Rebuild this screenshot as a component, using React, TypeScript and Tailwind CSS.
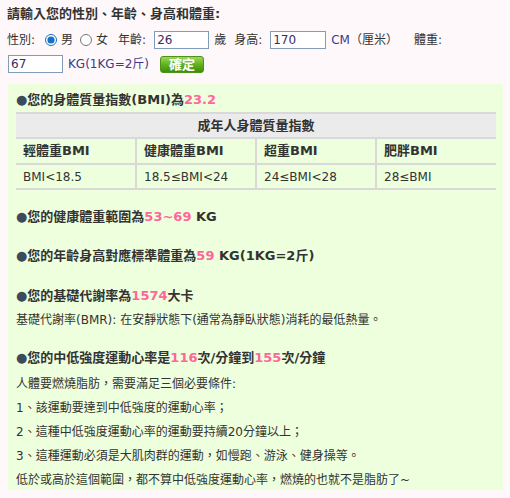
const FONT = "font-['DejaVu_Sans','Noto_Sans_CJK_TC',sans-serif]";

function Pink({ children }: { children: React.ReactNode }) {
  return <span className="text-[#ff6699]">{children}</span>;
}

function Heading({ children, className = "" }: { children: React.ReactNode; className?: string }) {
  return (
    <div className={`h-[24px] leading-[24px] text-[13px] font-bold text-[#333] ${className}`}>
      <span className="text-[#3d4a5c]">●</span>
      {children}
    </div>
  );
}

function Line({ children, className = "" }: { children: React.ReactNode; className?: string }) {
  return <div className={`h-[24px] leading-[24px] text-[12px] text-[#333] ${className}`}>{children}</div>;
}

const cols = [
  { label: "輕體重BMI", range: "BMI<18.5" },
  { label: "健康體重BMI", range: "18.5≤BMI<24" },
  { label: "超重BMI", range: "24≤BMI<28" },
  { label: "肥胖BMI", range: "28≤BMI" },
];

export default function App() {
  return (
    <div className={`w-[510px] h-[498px] bg-[#fff8fa] text-[#333] ${FONT}`}>
      <div className="h-[28px] leading-[28px] px-[7px] text-[13px] font-bold">請輸入您的性別、年齡、身高和體重:</div>

      <div className="h-[24px] flex items-center pl-[7px] text-[12px]">
        <span>性別:</span>
        <input type="radio" name="sex" defaultChecked className="ml-[10px] w-[12px] h-[12px] accent-[#1670c4]" />
        <span className="ml-[4px]">男</span>
        <input type="radio" name="sex" className="ml-[7px] w-[12px] h-[12px]" />
        <span className="ml-[4px]">女</span>
        <span className="ml-[10px]">年齡:</span>
        <input
          defaultValue="26"
          className="ml-[8px] w-[55px] h-[18px] border border-[#7f9db9] bg-white px-[2px] text-[12px] text-[#3a2a66] outline-none"
        />
        <span className="ml-[5px]">歲</span>
        <span className="ml-[8px]">身高:</span>
        <input
          defaultValue="170"
          className="ml-[8px] w-[56px] h-[18px] border border-[#7f9db9] bg-white px-[2px] text-[12px] text-[#3a2a66] outline-none"
        />
        <span className="ml-[5px] text-[#3a3a8a]">CM</span>
        <span>（厘米）</span>
        <span className="ml-[16px]">體重:</span>
      </div>

      <div className="h-[24px] flex items-center pl-[8px] text-[12px]">
        <input
          defaultValue="67"
          className="w-[55px] h-[18px] border border-[#7f9db9] bg-white px-[2px] text-[12px] text-[#3a2a66] outline-none"
        />
        <span className="ml-[5px] text-[#3a3a8a]">KG(1KG=2斤)</span>
        <button className="ml-[11px] w-[44px] h-[17px] rounded-[3px] border border-[#4b9414] bg-gradient-to-b from-[#9ad85c] via-[#62b220] to-[#3f8c0c] text-white text-[13px] font-bold leading-[15px]">
          確定
        </button>
      </div>

      <div className="mt-[8px] ml-[8px] w-[495px] h-[406px] bg-[#eeffdd] pl-[8px] pr-[7px] pt-[4px]">
        <Heading>
          您的身體質量指數(BMI)為<Pink>23.2</Pink>
        </Heading>

        <table className="w-full border-collapse text-[12px]">
          <thead>
            <tr>
              <th colSpan={4} className="h-[25px] bg-[#ebebeb] border-t-2 border-[#d9d9d9] text-[13px] font-bold text-center">
                成年人身體質量指數
              </th>
            </tr>
          </thead>
          <tbody>
            <tr>
              {cols.map((c, i) => (
                <td
                  key={c.label}
                  className={`h-[26px] w-1/4 pl-[7px] text-left text-[13px] font-bold border-t-2 border-[#d9d9d9] ${i > 0 ? "border-l-2" : ""}`}
                >
                  {c.label}
                </td>
              ))}
            </tr>
            <tr>
              {cols.map((c, i) => (
                <td
                  key={c.range}
                  className={`h-[25px] pl-[7px] text-left border-y-2 border-[#d9d9d9] ${i > 0 ? "border-l-2" : ""}`}
                >
                  {c.range}
                </td>
              ))}
            </tr>
          </tbody>
        </table>

        <Heading className="mt-[15px]">
          您的健康體重範圍為<Pink>53~69</Pink> KG
        </Heading>
        <Heading className="mt-[15px]">
          您的年齡身高對應標準體重為<Pink>59</Pink> KG(1KG=2斤)
        </Heading>
        <Heading className="mt-[16px]">
          您的基礎代謝率為<Pink>1574</Pink>大卡
        </Heading>
        <Line>基礎代謝率(BMR): 在安靜狀態下(通常為靜臥狀態)消耗的最低熱量。</Line>
        <Heading className="mt-[14px]">
          您的中低強度運動心率是<Pink>116</Pink>次/分鐘到<Pink>155</Pink>次/分鐘
        </Heading>
        <Line className="mt-[2px]">人體要燃燒脂肪，需要滿足三個必要條件:</Line>
        <Line>1、該運動要達到中低強度的運動心率；</Line>
        <Line>2、這種中低強度運動心率的運動要持續20分鐘以上；</Line>
        <Line>3、這種運動必須是大肌肉群的運動，如慢跑、游泳、健身操等。</Line>
        <Line>低於或高於這個範圍，都不算中低強度運動心率，燃燒的也就不是脂肪了~</Line>
      </div>
    </div>
  );
}
